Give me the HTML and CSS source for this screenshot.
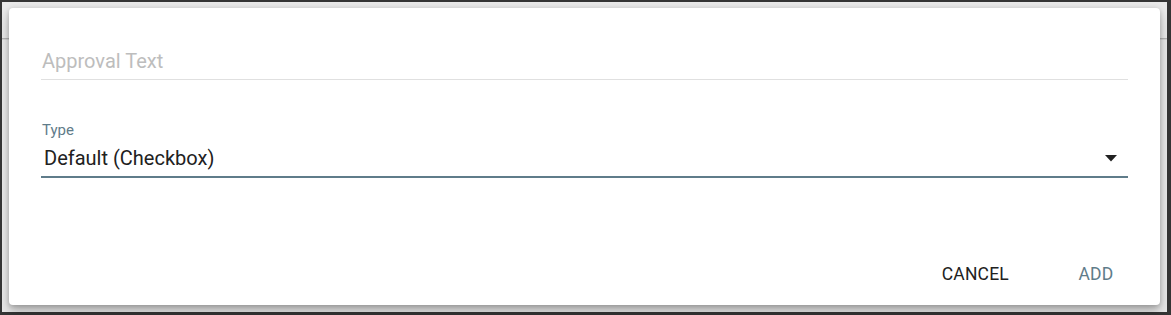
FILE: index.html
```html
<!DOCTYPE html>
<html>
<head>
<meta charset="utf-8">
<link rel="stylesheet" href="styles.css">
</head>
<body>
<div class="backdrop">
  <div class="dialog">
    <div class="content">
      <div class="field text-field">
        <span class="hint">Approval Text</span>
      </div>
      <div class="field select-field">
        <label class="float-label">Type</label>
        <div class="select-row">
          <span class="value">Default (Checkbox)</span>
          <svg class="arrow" width="12" height="7" viewBox="0 0 12 7"><polygon points="0,0 12,0 6,6.5" fill="#212121"/></svg>
        </div>
      </div>
    </div>
    <div class="actions">
      <button class="btn btn-cancel">Cancel</button>
      <button class="btn btn-add">Add</button>
    </div>
  </div>
</div>
</body>
</html>
```

FILE: styles.css
```css
html, body {
  margin: 0;
  padding: 0;
}
body {
  width: 1171px;
  height: 315px;
  box-sizing: border-box;
  background: #353535;
  padding: 2px 4px 3px 2px;
  font-family: Roboto, "Liberation Sans", sans-serif;
  overflow: hidden;
}
.backdrop {
  height: 100%;
  box-sizing: border-box;
  padding: 6px 5px 0 7px;
  background:
    linear-gradient(to bottom, transparent 36px, #b4b4b4 36px, #b4b4b4 37px, #d6d6d6 37px, #d6d6d6 38px, transparent 38px),
    #e9e9e9;
}
.dialog {
  width: 1151px;
  height: 297px;
  box-sizing: border-box;
  background: #fff;
  border-radius: 4px;
  box-shadow: 0 7px 12px rgba(0,0,0,0.24), 0 2px 4px rgba(0,0,0,0.12), 0 0 6px rgba(0,0,0,0.08);
  display: flex;
  flex-direction: column;
}
.content {
  padding: 41px 32px 0 32px;
  flex: 1;
}
.text-field {
  border-bottom: 1px solid #e0e0e0;
  padding: 0 0 6px 1px;
  height: 24px;
}
.hint {
  display: block;
  font-size: 20px;
  line-height: 24px;
  color: #bdbdbd;
}
.select-field {
  margin-top: 41px;
  border-bottom: 2px solid #5f7c8a;
  padding-bottom: 6px;
}
.float-label {
  display: block;
  font-size: 15px;
  line-height: 18px;
  color: #5f7c8a;
  padding-left: 1px;
}
.select-row {
  margin-top: 7px;
  display: flex;
  align-items: center;
  justify-content: space-between;
  height: 24px;
}
.value {
  font-size: 20px;
  line-height: 24px;
  color: #212121;
  padding-left: 3px;
}
.arrow {
  margin-right: 11px;
  margin-top: 1px;
}
.actions {
  display: flex;
  justify-content: flex-end;
  align-items: center;
  gap: 27px;
  padding: 0 20px 21px 0;
}
.btn {
  font-family: Roboto, "Liberation Sans", sans-serif;
  font-size: 17.5px;
  font-weight: 400;
  letter-spacing: 0.2px;
  text-transform: uppercase;
  background: transparent;
  border: none;
  min-width: 88px;
  height: 20px;
  line-height: 20px;
  padding: 0 16px;
  text-align: center;
  cursor: pointer;
}
.btn-cancel {
  color: #212121;
}
.btn-add {
  color: #5f7c8a;
}
```
